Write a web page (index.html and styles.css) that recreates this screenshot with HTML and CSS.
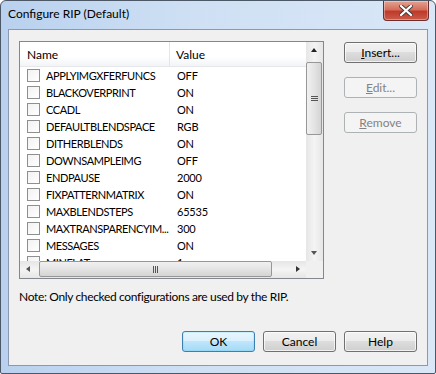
FILE: index.html
```html
<!DOCTYPE html>
<html lang="en">
<head>
    <meta charset="UTF-8">
    <title>Configure RIP (Default)</title>
    <link rel="stylesheet" href="styles.css">
</head>
<body>
    <div class="window">
        <div class="titlebar">
            <span class="title">Configure RIP (Default)</span>
            <div class="close-button">
                <svg width="14" height="11" viewBox="0 0 14 11">
                    <path d="M2 1 L12 10 M12 1 L2 10" stroke="#3d3d3d" stroke-width="4" stroke-linecap="square"/>
                    <path d="M2 1 L12 10 M12 1 L2 10" stroke="#ffffff" stroke-width="2.2" stroke-linecap="square"/>
                </svg>
            </div>
        </div>
        <div class="client">
            <div class="main-row">
                <div class="listbox">
                    <div class="list-area">
                        <div class="list-header">
                            <div class="col-name">Name</div>
                            <div class="col-value">Value</div>
                        </div>
                        <div class="list-rows" id="list-rows"></div>
                    </div>
                    <div class="vscroll">
                        <div class="arrow arrow-up"></div>
                        <div class="vtrack">
                            <div class="vthumb"><span class="grip-v"></span></div>
                        </div>
                        <div class="arrow arrow-down"></div>
                    </div>
                    <div class="hscroll">
                        <div class="arrow arrow-left"></div>
                        <div class="htrack">
                            <div class="hthumb"><span class="grip-h"></span></div>
                        </div>
                        <div class="arrow arrow-right"></div>
                    </div>
                    <div class="corner"></div>
                </div>
                <div class="side-buttons">
                    <button class="btn"><u>I</u>nsert...</button>
                    <button class="btn" disabled><u>E</u>dit...</button>
                    <button class="btn" disabled><u>R</u>emove</button>
                </div>
            </div>
            <div class="note">Note: Only checked configurations are used by the RIP.</div>
            <div class="bottom-buttons">
                <button class="btn btn-default">OK</button>
                <button class="btn">Cancel</button>
                <button class="btn">Help</button>
            </div>
        </div>
    </div>

    <script>
        const settings = [
            ['APPLYIMGXFERFUNCS', 'OFF'],
            ['BLACKOVERPRINT', 'ON'],
            ['CCADL', 'ON'],
            ['DEFAULTBLENDSPACE', 'RGB'],
            ['DITHERBLENDS', 'ON'],
            ['DOWNSAMPLEIMG', 'OFF'],
            ['ENDPAUSE', '2000'],
            ['FIXPATTERNMATRIX', 'ON'],
            ['MAXBLENDSTEPS', '65535'],
            ['MAXTRANSPARENCYIM...', '300'],
            ['MESSAGES', 'ON'],
            ['MINFLAT', '1']
        ];

        const rows = document.getElementById('list-rows');
        settings.forEach(function (item) {
            const row = document.createElement('div');
            row.className = 'list-row';
            row.innerHTML = '<div class="col-name"><span class="checkbox"></span><span class="name-text">' + item[0] + '</span></div>' +
                            '<div class="col-value">' + item[1] + '</div>';
            rows.appendChild(row);
        });
    </script>
</body>
</html>
```

FILE: styles.css
```css
body {
    margin: 0;
    padding: 0;
    font-family: Lato, "Noto Sans", sans-serif;
    font-size: 12px;
    color: #000;
    background-color: #fff;
}
.window {
    width: 436px;
    height: 374px;
    box-sizing: border-box;
    border: 1px solid #4d5866;
    border-radius: 6px 6px 2px 2px;
    background: linear-gradient(90deg, #b9d1ee 0%, #cfe0f4 45%, #d9e7f7 100%);
    display: flex;
    flex-direction: column;
    padding: 0 7px 7px 7px;
    overflow: hidden;
}
.titlebar {
    height: 28px;
    display: flex;
    align-items: flex-start;
    justify-content: space-between;
}
.title {
    margin-top: 5px;
    font-size: 12px;
    color: #000;
}
.close-button {
    width: 44px;
    height: 19px;
    margin-right: -1px;
    border: 1px solid #6d2d2d;
    border-top: none;
    border-radius: 0 0 4px 4px;
    background: linear-gradient(180deg, #e2a395 0%, #d56e5a 45%, #c0392b 55%, #c95c4a 100%);
    display: flex;
    align-items: center;
    justify-content: center;
    box-shadow: inset 0 0 0 1px rgba(255, 255, 255, 0.35);
}
.client {
    flex-grow: 1;
    background-color: #f0f0f0;
    border: 1px solid #8a99ad;
    padding: 11px 10px 0 10px;
    display: flex;
    flex-direction: column;
}
.main-row {
    display: flex;
    gap: 20px;
}
.listbox {
    width: 305px;
    height: 238px;
    box-sizing: border-box;
    border: 1px solid #828790;
    background-color: #fff;
    display: grid;
    grid-template-columns: 1fr 17px;
    grid-template-rows: 1fr 17px;
    overflow: hidden;
}
.list-area {
    overflow: hidden;
}
.list-header {
    height: 25px;
    display: flex;
    align-items: center;
    background: linear-gradient(180deg, #ffffff 0%, #ffffff 60%, #f3f4f6 100%);
    border-bottom: 1px solid #e5e7ea;
    box-sizing: border-box;
}
.list-header .col-name {
    width: 150px;
    padding-left: 7px;
    box-sizing: border-box;
    border-right: 1px solid #e3e5e8;
    height: 100%;
    display: flex;
    align-items: center;
}
.list-header .col-value {
    padding-left: 6px;
}
.list-row {
    height: 17px;
    display: flex;
    align-items: center;
    white-space: nowrap;
}
.list-row .col-name {
    width: 151px;
    padding-left: 7px;
    box-sizing: border-box;
    display: flex;
    align-items: center;
}
.name-text {
    font-size: 11px;
    letter-spacing: -0.4px;
}
.list-row .col-value {
    padding-left: 6px;
    font-size: 11px;
    letter-spacing: -0.2px;
}
.checkbox {
    width: 11px;
    height: 11px;
    border: 1px solid #8e8f8f;
    background: linear-gradient(135deg, #f2f2f2 0%, #ffffff 100%);
    margin-right: 6px;
    flex-shrink: 0;
}
.vscroll {
    display: flex;
    flex-direction: column;
    background: linear-gradient(90deg, #e6e6e6 0%, #f4f4f4 50%, #e6e6e6 100%);
}
.vtrack {
    flex-grow: 1;
    position: relative;
}
.vthumb {
    position: absolute;
    left: 0;
    right: 1px;
    top: 3px;
    height: 73px;
    box-sizing: border-box;
    border: 1px solid #979797;
    border-radius: 2px;
    background: linear-gradient(90deg, #f1f1f1 0%, #e4e4e4 50%, #d4d4d4 100%);
    display: flex;
    align-items: center;
    justify-content: center;
}
.grip-v {
    width: 7px;
    height: 5px;
    background: repeating-linear-gradient(180deg, #555 0, #555 1px, transparent 1px, transparent 2px);
}
.hscroll {
    display: flex;
    background: linear-gradient(180deg, #e6e6e6 0%, #f4f4f4 50%, #e6e6e6 100%);
}
.htrack {
    flex-grow: 1;
    position: relative;
}
.hthumb {
    position: absolute;
    top: 0;
    bottom: 1px;
    left: 2px;
    width: 233px;
    box-sizing: border-box;
    border: 1px solid #979797;
    border-radius: 2px;
    background: linear-gradient(180deg, #f1f1f1 0%, #e4e4e4 50%, #d4d4d4 100%);
    display: flex;
    align-items: center;
    justify-content: center;
}
.grip-h {
    width: 5px;
    height: 7px;
    background: repeating-linear-gradient(90deg, #555 0, #555 1px, transparent 1px, transparent 2px);
}
.corner {
    background-color: #f0f0f0;
}
.arrow {
    width: 17px;
    height: 17px;
    flex-shrink: 0;
    position: relative;
}
.arrow::after {
    content: "";
    position: absolute;
    width: 0;
    height: 0;
}
.arrow-up::after {
    left: 5px;
    top: 6px;
    border-left: 3.5px solid transparent;
    border-right: 3.5px solid transparent;
    border-bottom: 4px solid #222;
}
.arrow-down::after {
    left: 5px;
    top: 7px;
    border-left: 3.5px solid transparent;
    border-right: 3.5px solid transparent;
    border-top: 4px solid #555;
}
.arrow-left::after {
    left: 6px;
    top: 5px;
    border-top: 3.5px solid transparent;
    border-bottom: 3.5px solid transparent;
    border-right: 4px solid #555;
}
.arrow-right::after {
    left: 7px;
    top: 5px;
    border-top: 3.5px solid transparent;
    border-bottom: 3.5px solid transparent;
    border-left: 4px solid #333;
}
.side-buttons {
    display: flex;
    flex-direction: column;
    gap: 14px;
    padding-top: 1px;
}
.btn {
    width: 73px;
    height: 21px;
    box-sizing: border-box;
    border: 1px solid #707070;
    border-radius: 3px;
    background: linear-gradient(180deg, #f2f2f2 0%, #ebebeb 49%, #dddddd 50%, #cfcfcf 100%);
    font-family: Lato, "Noto Sans", sans-serif;
    font-size: 12px;
    color: #000;
    padding: 0;
    box-shadow: inset 0 0 0 1px rgba(255, 255, 255, 0.7);
}
.btn:disabled {
    border-color: #adb2b5;
    background: #f4f4f4;
    color: #838383;
    box-shadow: none;
}
.btn-default {
    border-color: #3c7fb1;
    background: linear-gradient(180deg, #eaf6fd 0%, #d9f0fc 49%, #bee6fd 50%, #a7d9f5 100%);
    box-shadow: inset 0 0 0 1px #48d5fd33;
}
.note {
    margin-top: 10px;
    line-height: 15px;
    font-size: 12px;
    letter-spacing: -0.35px;
}
.bottom-buttons {
    margin-top: 27px;
    display: flex;
    justify-content: flex-end;
    gap: 8px;
}
```
